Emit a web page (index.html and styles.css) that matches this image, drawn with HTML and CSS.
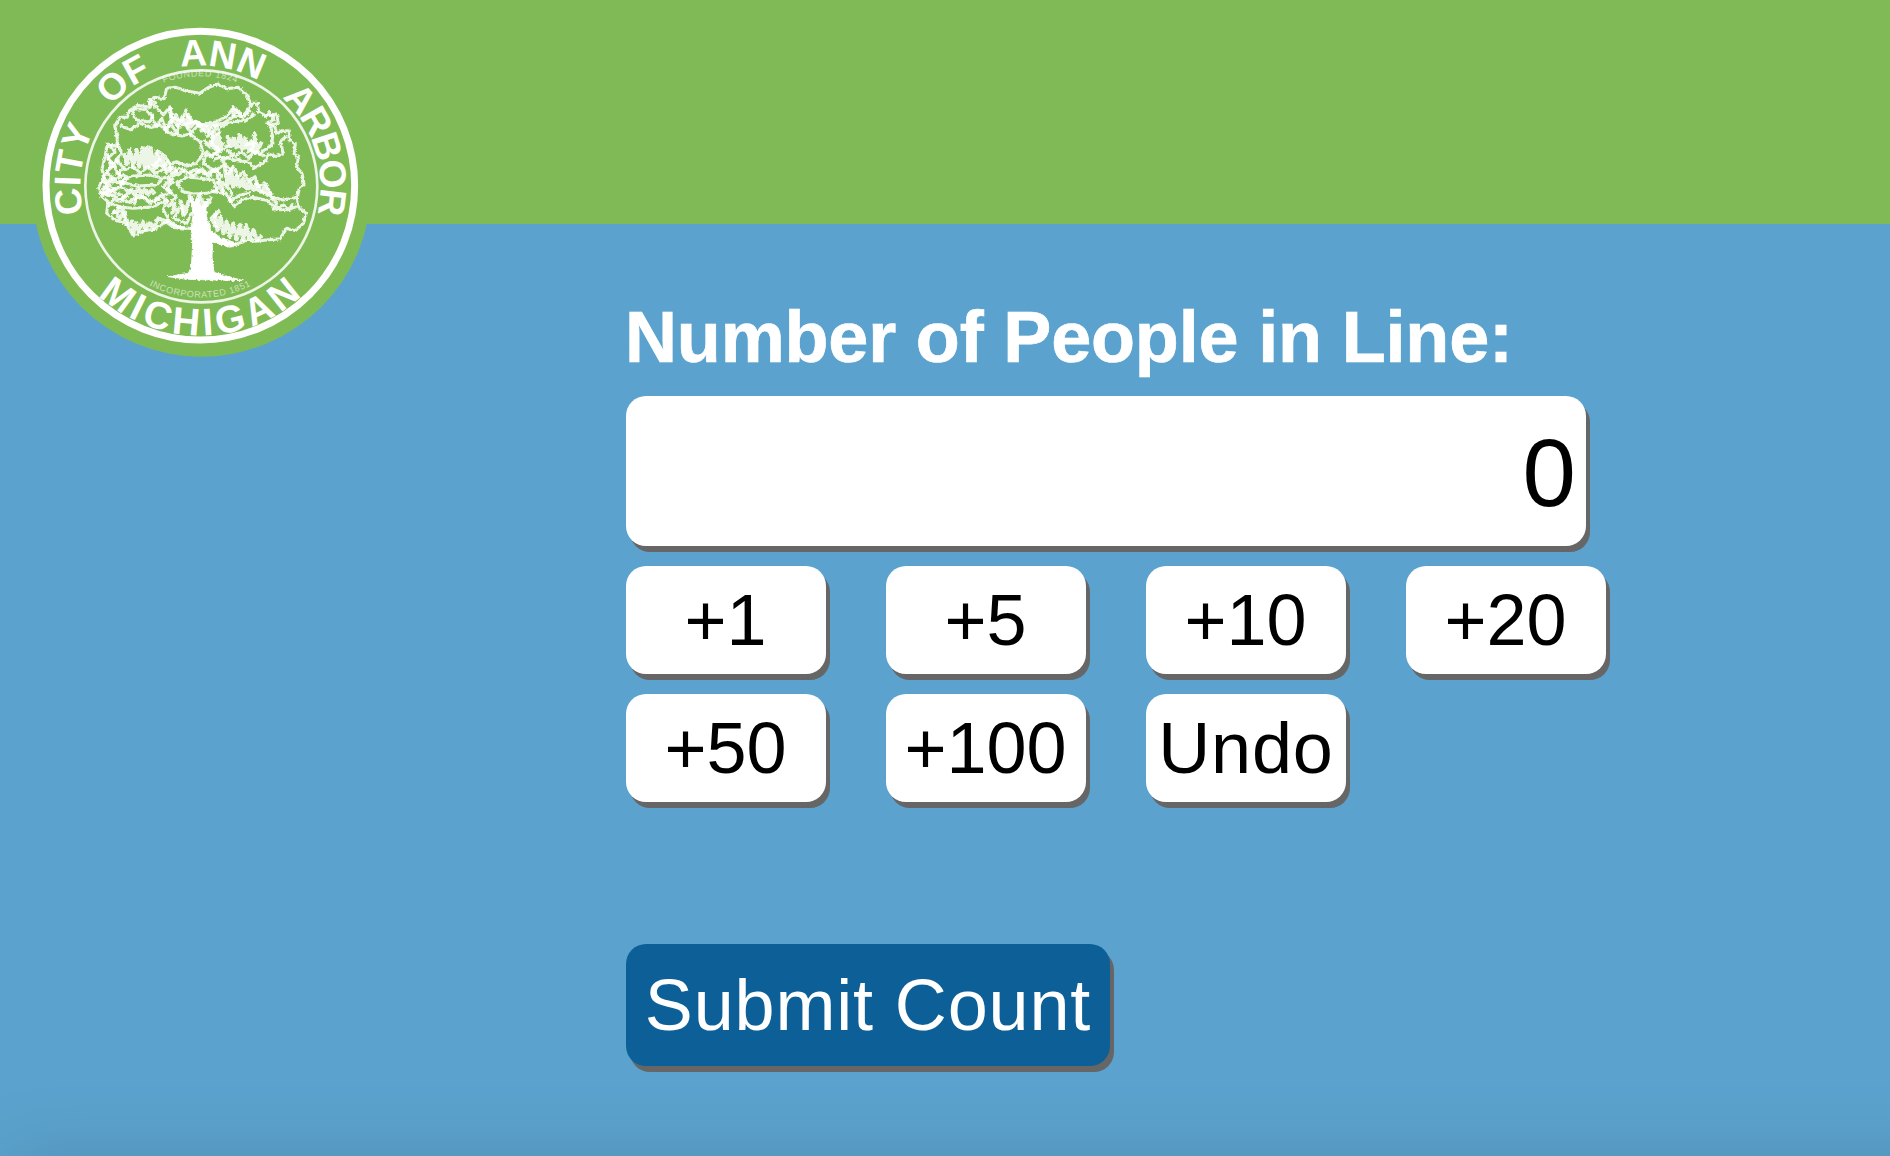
FILE: index.html
```html
<!DOCTYPE html>
<html lang="en">
<head>
<meta charset="utf-8">
<title>Line Counter</title>
<link rel="stylesheet" href="styles.css">
</head>
<body>
<header class="banner">
  <svg class="seal" viewBox="0 0 1080 1080" role="img" aria-label="City of Ann Arbor Michigan seal">
    <defs>
      <path id="arc-top" d="M196,630 A360,360 0 1 1 886,630"/>
      <path id="arc-founded" d="M220,520 A321,321 0 0 1 862,520"/>
      <path id="arc-bottom" d="M92,527 A449,449 0 0 0 990,527"/>
      <path id="arc-inc" d="M205,527 A336,336 0 0 0 877,527"/>
      <filter id="rough" x="-5%" y="-5%" width="110%" height="110%">
        <feTurbulence type="fractalNoise" baseFrequency="0.12" numOctaves="2" seed="4"/>
        <feDisplacementMap in="SourceGraphic" scale="11" xChannelSelector="R" yChannelSelector="G"/>
      </filter>
    </defs>
    <circle class="disc" cx="544" cy="531" r="509"/>
    <circle class="ring ring-outer" cx="541" cy="527" r="463"/>
    <circle class="ring ring-inner" cx="544" cy="529" r="348"/>
    <g class="tree" filter="url(#rough)">
      <path d="M385,275 L402,262 432,266 440,235 468,232 500,243 540,250 562,234 592,222 622,236 655,232 682,256 692,286 668,322 640,292 622,318 590,335 548,345 505,325 498,300 486,335 452,320 450,290 430,315 410,292Z"/>
      <path d="M410,280 L388,268 390,292 352,286 328,302 322,322 300,322 284,348 292,382 290,410 262,402 255,440 246,478 252,505 236,532 246,560 264,575 260,610 290,632 318,640 340,678 372,662 400,658 445,632 475,652 520,656"/>
      <path d="M300,345 L330,360 360,340 392,352 420,345 445,368 485,378 510,372 540,395 550,430 530,460 500,468 470,455 450,462 432,435 410,420"/>
      <path d="M345,296 L375,298 398,318 388,336 350,330 338,312Z"/>
      <path d="M692,280 L712,280 716,306 740,318 770,312 775,340 752,345 758,380 755,405 720,430 690,425 705,400 672,405"/>
      <path d="M735,325 L750,305 762,330 740,340 765,350 770,372 785,362 805,362 808,390 826,402 822,432 835,440 830,472 846,490 852,522 838,535 832,562 790,570 750,560 720,542"/>
      <path d="M800,378 L780,395 790,430 768,440 745,432 735,455 702,475 685,455 650,452 610,440 580,448"/>
      <path d="M832,562 L835,590 858,610 850,640 826,662 800,655 780,686 740,690 706,694 680,690 636,708 608,694 580,688"/>
      <path d="M600,535 L620,555 642,588 668,568 700,562 745,572 765,595 795,602 830,590 M750,560 L770,580 760,598 790,585 810,600 820,578"/>
      <path d="M470,520 L500,500 540,505 580,510 590,540 560,550 520,552 490,545Z"/>
      <path d="M300,515 L340,498 390,495 430,505 410,525 350,528Z M290,590 L340,595 400,590 440,570 430,600 445,625"/>
      <path d="M430,360 L455,345 470,370 480,345 500,342 510,372 530,350 540,345 560,370 575,350 590,345 600,365 570,395 598,420 575,440 560,425 550,460 580,480 570,500"/>
      <path d="M410,420 L420,450 400,465 430,470 445,455 455,490 480,475 500,490 530,478 555,492 585,478 600,490"/>
      <path d="M400,480 L425,460 440,490 460,470 475,495 495,478 520,498 545,475 565,498 590,470"/>
      <path d="M460,520 L445,500 465,492 440,540 470,560 450,580 475,605 460,625 500,640 520,600 M440,590 L465,580 455,610 485,590 490,620"/>
      <path d="M395,315 L410,350 425,325 440,365 450,330 480,350 M500,340 L530,335 560,350 610,340 640,320 675,318 692,300 M600,350 L640,335 680,330 705,310"/>
      <path d="M270,405 L285,425 262,445 285,465 258,485 280,505 255,520 285,535 250,550 290,560 270,580 300,590 280,610 310,600 315,635"/>
      <path d="M292,400 L305,430 288,450 312,475 290,490 320,500 300,530 330,545 300,570 345,580 350,555 400,575 430,550"/>
      <path d="M262,430 L272,470 250,500 265,540 248,535 M300,450 L275,460 302,500 268,515 312,520 278,545 320,560 285,575 M240,520 L262,510 245,550 275,560 M310,480 L340,470 360,488 385,470 405,490 430,478"/>
      <path d="M430,500 L450,510 430,530 455,545 425,560 445,575 M330,570 L370,562 390,580 420,565"/>
      <path d="M590,520 L605,500 590,480 610,465 625,492 640,470 655,500 670,485 685,515 705,500 712,530 735,520 755,555"/>
      <path d="M590,490 L600,530 580,545 612,550 605,515 635,545 630,575 660,555 690,550"/>
      <path class="heavy" d="M312,430 L320,462 330,420 340,470 350,420 358,470 368,415 374,470 380,412 386,470 392,415 400,472 408,432 412,462 425,440 440,478 455,468"/>
      <path class="heavy" d="M330,535 L345,555 355,535 365,553 375,537 385,553 395,540 405,552 M250,530 L275,545 255,550"/>
      <path class="heavy" d="M550,390 L570,410 580,380 590,415 595,370 600,415 610,395 M622,375 L628,408 640,385 648,412 660,375 668,418 676,382 684,422 692,395 700,425 705,372 712,425 725,395 M630,405 L720,418"/>
      <path class="heavy" d="M615,480 L622,525 634,485 640,530 650,500 660,530 668,505 680,535 690,518 700,540 712,522 722,545 735,530 752,552 M620,515 L700,535 755,553"/>
      <path class="heavy" d="M450,292 L456,335 468,315 475,345 488,320 500,352 505,315 512,350 525,335 545,352 M640,290 L640,315 650,298 660,312 M540,365 L560,352 570,372 590,355"/>
      <path class="heavy" d="M585,610 L592,660 602,620 610,670 620,635 630,680 640,640 650,688 660,645 670,690 678,645 688,690 700,660 712,690 725,675"/>
      <path class="heavy" d="M280,600 L300,625 312,605 325,645 335,635 340,668 348,640 355,662 368,635 375,658 388,640 400,655 415,625 440,635 460,650 500,658"/>
      <path d="M620,420 L645,438 665,425 685,445 700,425 735,438 M560,380 L580,370 575,410 600,425 625,405 M600,440 L620,470 650,480 M560,440 L590,430 610,450 640,432 660,450"/>
      <path class="heavy" d="M480,570 L495,610 510,560 525,590 540,555 555,595 575,560 M600,600 L575,625 590,655"/>
      <path class="fill" d="M510,560 L520,610 512,660 518,700 514,770 505,790 445,800 500,808 670,812 620,798 582,786 576,740 578,696 630,712 650,700 600,682 572,660 560,620 562,565 545,590 532,558 522,580Z"/>
    </g>
    <g class="legend">
      <text class="city"><textPath href="#arc-top" startOffset="11.2%">CITY</textPath></text>
      <text><textPath href="#arc-top" startOffset="33.1%">OF</textPath></text>
      <text><textPath href="#arc-top" startOffset="54.6%">ANN</textPath></text>
      <text class="arbor"><textPath href="#arc-top" startOffset="84.1%">ARBOR</textPath></text>
      <text class="michigan"><textPath href="#arc-bottom" startOffset="50.4%">MICHIGAN</textPath></text>
      <text class="small"><textPath href="#arc-founded" startOffset="50%">FOUNDED  1824</textPath></text>
      <text class="small"><textPath href="#arc-inc" startOffset="50%">INCORPORATED 1851</textPath></text>
    </g>
  </svg>
</header>
<main class="counter">
  <label class="title" for="count">Number of People in Line:</label>
  <input class="count" id="count" type="text" value="0">
  <div class="keys">
    <button class="key">+1</button>
    <button class="key">+5</button>
    <button class="key">+10</button>
    <button class="key">+20</button>
    <button class="key">+50</button>
    <button class="key">+100</button>
    <button class="key undo">Undo</button>
  </div>
  <button class="submit">Submit Count</button>
</main>
<div class="edge-shade"></div>
</body>
</html>
```
FILE: styles.css
```css
* { box-sizing: border-box; }

body {
  margin: 0;
  height: 1156px;
  overflow: hidden;
  background: #5ba3ce;
  font-family: "Helvetica Neue", "Liberation Sans", Arial, sans-serif;
}

.banner {
  height: 224px;
  padding: 10px 20px;
  background: #7fba56;
}

.seal {
  display: block;
  width: 360px;
  height: 360px;
}

.disc { fill: #7fbb54; }
.ring { fill: none; stroke: #fff; }
.ring-outer { stroke-width: 21; }
.ring-inner { stroke-width: 8; stroke-opacity: .85; }

.tree path {
  fill: none;
  stroke: #fff;
  stroke-opacity: .85;
  stroke-width: 9;
  stroke-linejoin: round;
}
.tree .heavy { stroke-width: 12; }
.tree .fill { fill: #fff; stroke-width: 3; }

.legend {
  fill: #fff;
  font-family: "Liberation Sans", Arial, sans-serif;
  font-size: 112px;
  font-weight: 700;
  text-anchor: middle;
}
.legend .city { letter-spacing: 1px; }
.legend .arbor { letter-spacing: -7px; }
.legend .michigan { font-size: 115px; letter-spacing: 13px; }
.legend .small {
  font-size: 27px;
  font-weight: 400;
  letter-spacing: 2px;
  fill-opacity: .6;
}

.counter {
  display: flex;
  flex-direction: column;
  align-items: flex-start;
  margin-left: 626px;
  padding-top: 72px;
}

.title {
  height: 100px;
  margin-left: -1px;
  line-height: 82px;
  color: #fff;
  font-size: 72px;
  font-weight: 700;
  letter-spacing: -.17px;
  white-space: nowrap;
  -webkit-text-stroke: .7px #fff;
}

.count, .key, .submit {
  border: 0;
  border-radius: 20px;
  box-shadow: 4px 6px 0 #666;
  font-family: inherit;
  font-size: 72px;
}

.count {
  width: 960px;
  height: 150px;
  padding: 3px 10px 0;
  background: #fff;
  color: #000;
  font-size: 96px;
  text-align: right;
}

.keys {
  display: grid;
  grid-template-columns: repeat(4, 200px);
  grid-auto-rows: 108px;
  gap: 20px 60px;
  margin-top: 20px;
}

.key {
  padding: 0 1px 0 0;
  background: #fff;
  color: #000;
}

.undo {
  padding: 0;
  letter-spacing: .8px;
}

.submit {
  width: 484px;
  height: 122px;
  margin-top: 142px;
  padding: 0;
  background: #0d6097;
  color: #fff;
  letter-spacing: .85px;
  white-space: nowrap;
}

.edge-shade {
  position: fixed;
  top: 1156px;
  left: 4px;
  right: -120px;
  height: 200px;
  box-shadow: 0 0 80px rgba(0, 0, 0, .12);
}
```
